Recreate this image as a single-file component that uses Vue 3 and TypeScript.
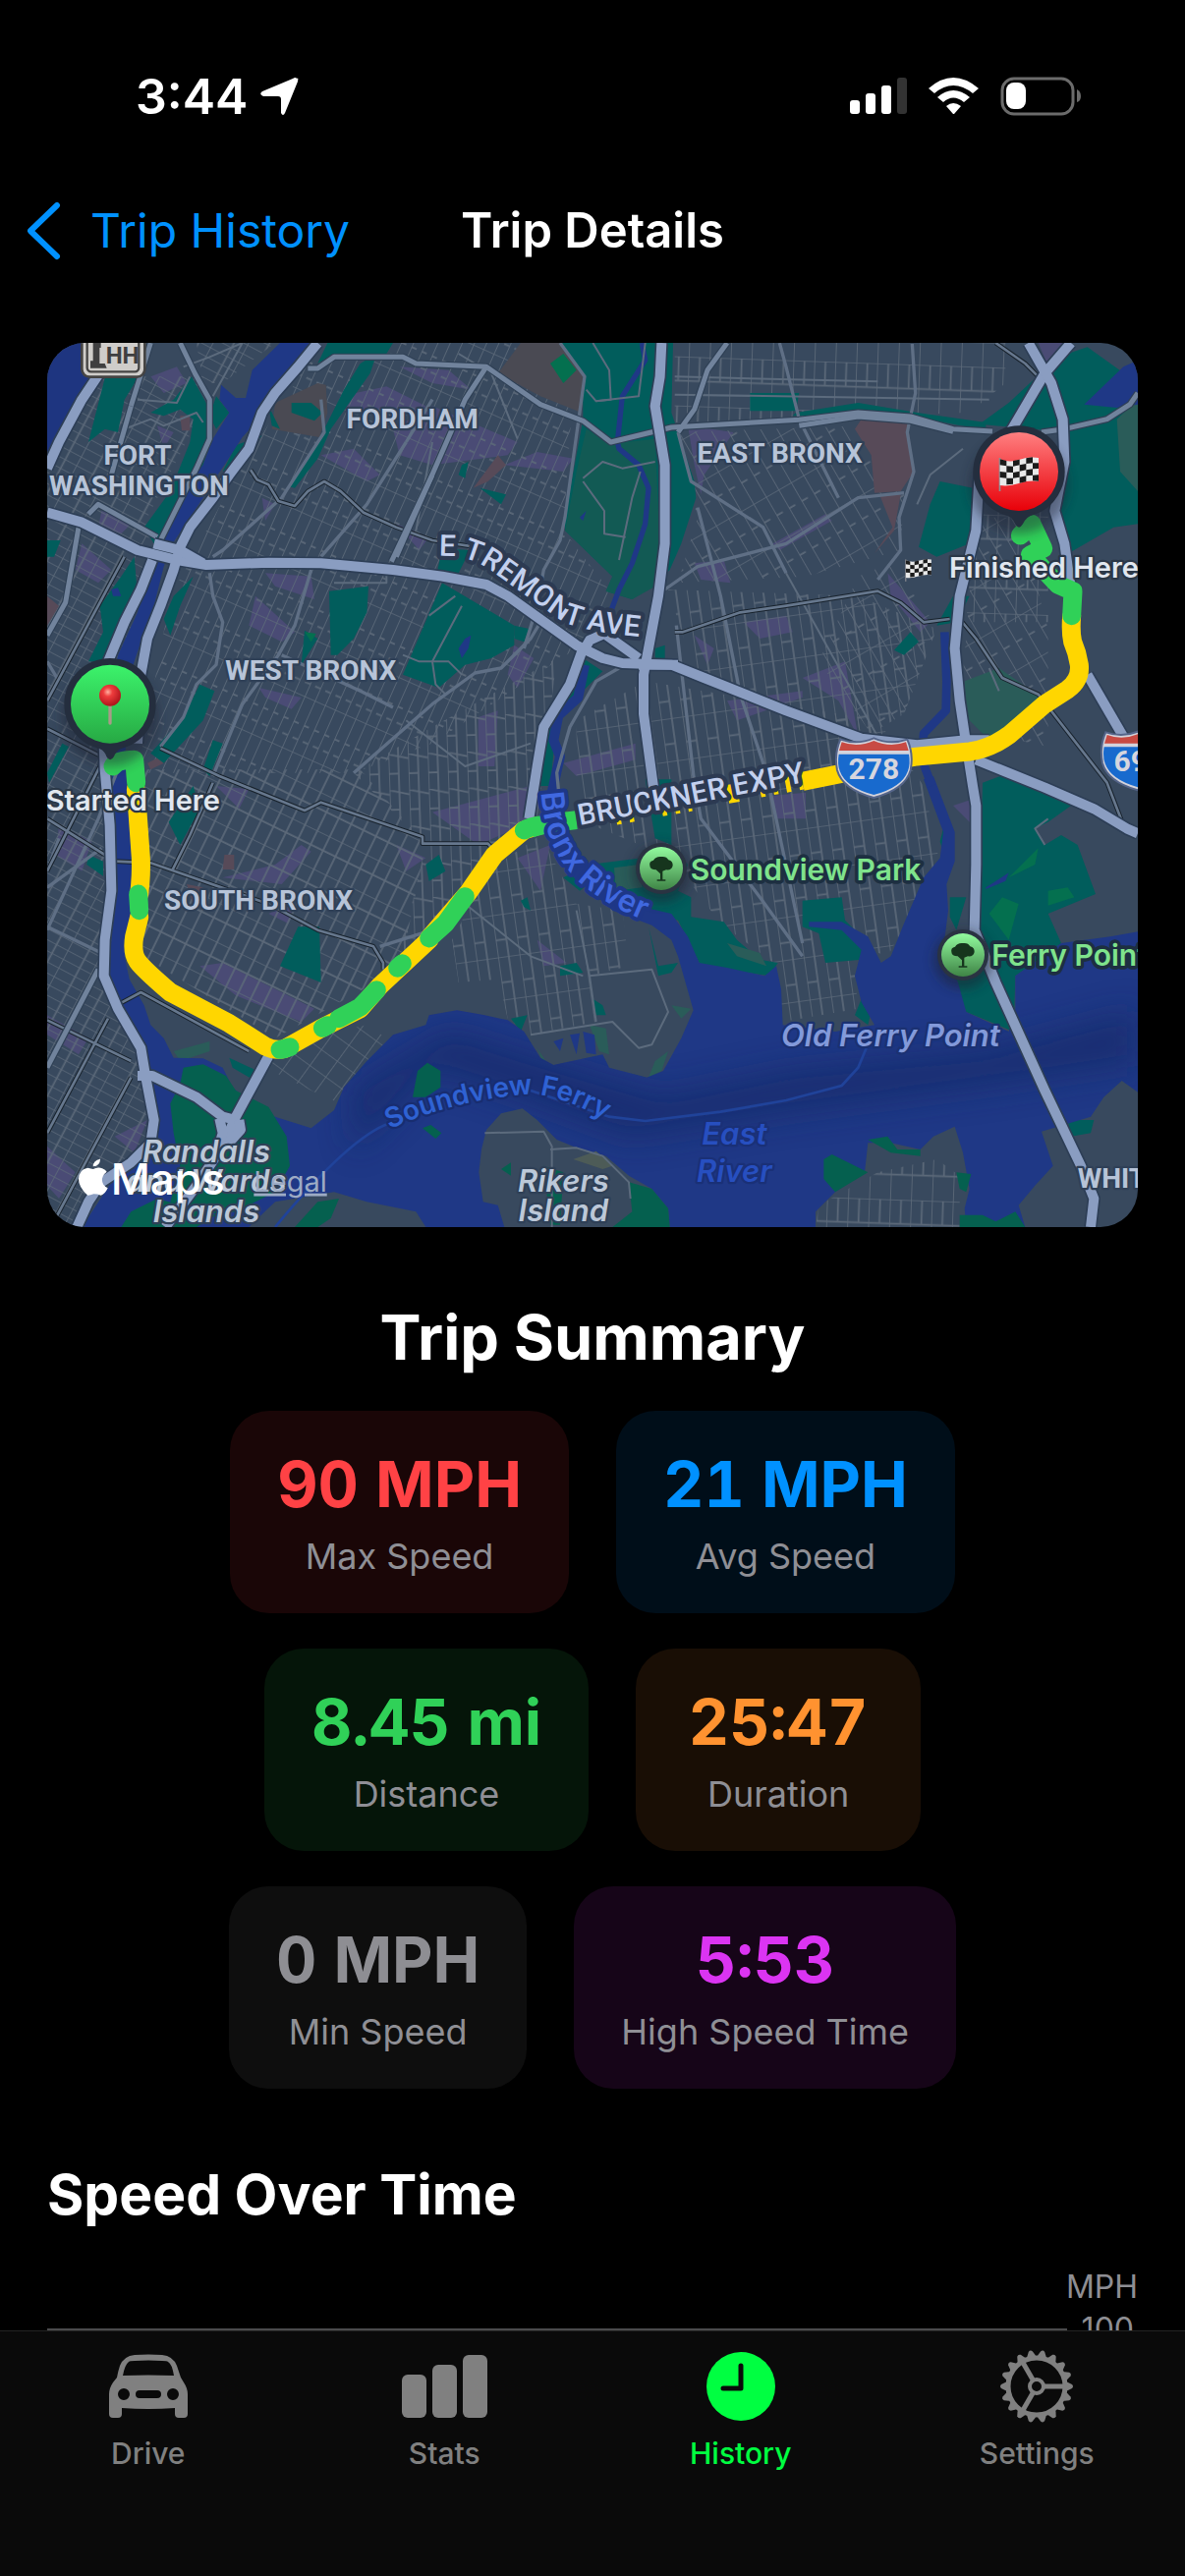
<script setup lang="ts">
interface Stat {
  value: string
  label: string
  tone: string
}

interface Tab {
  id: string
  label: string
}

const statRows: Stat[][] = [
  [
    { value: '90 MPH', label: 'Max Speed', tone: 'red' },
    { value: '21 MPH', label: 'Avg Speed', tone: 'blue' },
  ],
  [
    { value: '8.45 mi', label: 'Distance', tone: 'green' },
    { value: '25:47', label: 'Duration', tone: 'orange' },
  ],
  [
    { value: '0 MPH', label: 'Min Speed', tone: 'gray' },
    { value: '5:53', label: 'High Speed Time', tone: 'purple' },
  ],
]

const tabs: Tab[] = [
  { id: 'drive', label: 'Drive' },
  { id: 'stats', label: 'Stats' },
  { id: 'history', label: 'History' },
  { id: 'settings', label: 'Settings' },
]
const activeTab = 'history'

const gearTeeth: number[] = Array.from({ length: 18 }, (_, i) => i * 20)

// Street grids: an area and the grid pattern that fills it
const grids: { d: string; fill: string }[] = [
  { d: 'M24 380L190 130H500V230L330 560L340 700L215 1100L225 1860L320 2180L350 2430L100 2727H24Z', fill: 'gridManhattan' },
  { d: 'M480 27H720L560 150H500Z', fill: 'gridManhattan' },
  { d: 'M860 27H1640L1600 600L1800 860L1640 960L1200 1250L960 1340H300L400 800L620 400Z', fill: 'gridWest' },
  { d: 'M280 1330H980L1180 1560L1110 1900L990 2000L720 2150L300 1890Z', fill: 'gridSouth' },
  { d: 'M720 2170L1000 2110L1120 2190L975 2375L830 2310L690 2240Z', fill: 'gridPort' },
  { d: 'M960 1340L1200 1200L1580 990L1520 1480L1380 1560L1180 1830L1100 1900L1180 1560Z', fill: 'gridMid' },
  { d: 'M1370 1640L1530 1530L1640 1740L1780 1760L1800 1930L1680 1960L1700 2100L1500 2140L1430 2090L1400 1970L1280 1980L1260 1850Z', fill: 'gridEast' },
  { d: 'M1640 1180L1850 1060L2560 1180L2700 1380L2750 1620L2590 1900L2480 1860L2500 2060L2270 2100L2255 1930L2080 1800L1930 1600L1640 1480Z', fill: 'gridEast' },
  { d: 'M1940 27H2950V150L2840 240L1940 270Z', fill: 'gridNorth' },
  { d: 'M1940 300L2520 280L2640 480L2630 660L2340 740L1950 760L2010 560Z', fill: 'gridSlant' },
  { d: 'M1920 780L2500 800L2740 900L2640 1160L2540 1220L2000 1030Z', fill: 'gridEast' },
  { d: 'M2500 740L2620 690L2740 900L2640 1160L2540 1220L2380 1000Z', fill: 'gridSlant' },
  { d: 'M2860 560H2990L3080 900V1260L2940 1230L2820 1040Z', fill: 'gridSlant' },
  { d: 'M2860 520H3080V880H2830Z', fill: 'gridNorth' },
  { d: 'M2380 2660L2560 2560L2740 2520L2810 2570V2727H2370Z', fill: 'gridNorth' },
]

const shops: string[] = [
  'M340 130L420 100L450 150L380 180Z', 'M190 540L290 570L250 610L180 590Z', 'M130 640L220 720L180 760L110 720Z',
  'M360 280L410 300L380 350Z', 'M920 190L1060 160L1180 220L1160 250L940 230Z', 'M860 370L960 350L1040 430L1000 450Z',
  'M680 500L720 520L690 570Z', 'M690 730L830 740L840 810L720 770Z', 'M660 800L780 910L740 940L640 890Z',
  'M1090 580L1190 620L1160 660Z', 'M670 1080L800 1110L770 1145L690 1110Z', 'M1080 290L1200 220L1460 330L1430 370L1200 400L1100 370Z',
  'M1420 400L1520 360L1630 380L1600 420Z', 'M1100 100L1250 110L1320 170L1200 150Z', 'M1450 950L1510 990L1460 1080L1430 1040Z',
  'M1340 1170L1400 1150L1390 1320H1340Z', 'M1600 1310L1820 1250V1300L1640 1350Z', 'M1980 280L2120 300L2030 430L2020 490L2000 400Z',
  'M2000 700L2090 690L2110 760L2020 750Z', 'M2150 880L2280 860L2300 910L2200 930Z', 'M2000 920L2060 960L2040 1010Z',
  'M2240 640L2400 550L2420 570L2260 660Z', 'M2460 1000L2500 1230L2440 1120L2330 1050Z', 'M2590 730L2720 880L2690 910L2600 800Z',
  'M540 1380L640 1390L610 1450Z', 'M560 1660L720 1620L800 1560L830 1580L740 1680Z', 'M490 1930L560 1920L840 2060L800 2100L600 2020Z',
  'M60 1500L160 1550L130 1640L50 1590Z', 'M24 2080L150 2150L120 2200L24 2140Z', 'M230 2450L330 2400L290 2500Z',
  'M1200 1460L1500 1380V1490L1340 1560Z', 'M1460 1600L1560 1560L1530 1700Z', 'M1520 1850L1610 1920L1540 1930Z',
  'M2230 1410L2340 1400V1480H2250Z', 'M2790 1440L2850 1420V1500Z', 'M1090 1560L1180 1600L1120 1640Z', 'M700 1770L780 1730L760 1800Z',
  'M2100 1120L2330 1090L2330 1110L2130 1180Z', 'M24 2480L110 2560L60 2640L24 2600Z', 'M3050 27H3130L3085 110Z',
]

const cemeteries: string[] = [
  'M720 210L850 150L875 155L880 240L855 315L710 290Z', 'M1400 120L1470 27H1590L1665 130L1655 240L1530 190Z',
]
const campuses: string[] = [
  'M1325 470L1400 370L1425 400L1370 450Z', 'M2490 290L2510 260H2650L2670 420L2630 480L2550 485L2540 370Z',
  'M2565 490H2630L2610 600L2550 670L2605 590Z', 'M430 250H460V295H435Z', 'M24 800L60 830L24 890Z',
  'M330 1310L370 1290L380 1310L340 1330Z', 'M565 1590H595V1635H560Z', 'M450 1680L500 1690L470 1740Z', 'M430 2540L460 2510L480 2550L450 2570Z',
]

const parks: string[] = [
  'M200 135H300L260 200L240 300L200 290L150 330Z',
  'M465 130L520 230L530 300L500 400L440 480L400 570L350 640L320 590L400 480L460 330L470 260L430 230L380 250L340 240L410 200Z',
  'M540 190L580 240L540 290L520 250Z', 'M600 340L680 310L600 400L560 420Z',
  'M290 680L250 740L185 830L195 910L150 1000L210 1000L300 800Z', 'M470 740L430 830L400 920L380 870L410 800Z',
  'M700 220L735 290L710 280Z', 'M770 210L830 210L865 240L840 265L770 240Z',
  'M1030 60L1010 120L890 290L850 380L780 470L760 465L850 330L930 170L980 90Z', 'M880 27H1080L1060 60L900 60L850 90Z',
  'M885 785L1005 770L1000 850L960 930L910 980H890Z', 'M810 905L850 930L800 1010Z',
  'M1230 760L1450 890V950L1380 990L1300 1010L1220 1080L1110 1040Z', 'M1230 655L1315 660L1280 730L1215 725Z', 'M1450 890L1495 900L1480 940L1450 930Z',
  'M1590 27H1935L1930 240L1950 300L2000 450L2005 500L1960 640L1925 720L1870 770L1810 810L1730 785L1750 740L1605 600V560L1660 260V120Z',
  'M1345 470L1425 490L1410 520Z', 'M1290 400L1310 390L1300 440L1280 430Z', 'M490 1070L535 1090L500 1180L380 1310L340 1280L440 1170Z',
  'M530 1240L560 1250L520 1350L500 1330Z', 'M24 630H65L45 680H24Z', 'M70 1250L90 1260L30 1370L24 1340Z',
  'M2170 180H2320L2310 235H2170Z', 'M2310 240L2500 210L2680 240L2890 270L2890 295L2660 250H2300Z',
  'M1660 990L1720 1030L1640 1110L1580 1180L1560 1380H1530L1550 1200L1640 1060Z',
  'M2870 275L2960 210L3110 70L3200 40L3354 150V580L3280 590L3150 665L3110 600L3100 540L3140 300Z',
  'M2750 450L2850 470L2840 640L2740 680L2685 650L2720 520Z', 'M2790 800H2840L2800 880L2740 890Z',
  'M2610 965L2660 910L2685 940L2640 980Z', 'M1880 960L1910 950V1000L1880 990Z', 'M1850 1360H1930V1560L1880 1540Z',
  'M2880 1370L2960 1340L3150 1440L3080 1490L3040 1510L3070 1560L3120 1530L3170 1560L3225 1710L3080 1770L3120 1860L2980 1960L2975 2130L2830 2070L2790 1960L2870 1820Z',
  'M1600 1660L1680 1620L1840 1600L1950 1590L1980 1620L1950 1700L1990 1720V1780L2090 1795L2130 1850L2200 1910L2255 1920L2230 1960L2020 1930L1950 1790L1830 1760L1700 1660L1650 1700Z',
  'M2330 1730L2450 1720L2460 1790L2530 1860L2510 1910L2400 1920L2380 1830L2330 1810Z',
  'M790 1810L855 1810L860 1980L735 1930Z', 'M150 1590L195 1610V1655L145 1620Z', 'M395 1490L470 1380L490 1450L430 1560Z',
  'M580 2210L655 2245L650 2275L590 2240Z', 'M1180 1620L1220 1590L1240 1640L1190 1670Z', 'M1590 1930L1640 1920L1660 1950L1590 1960Z',
  'M1440 2090L1490 2080L1470 2130Z', 'M1860 1810L1890 1930L1950 1920L1930 1950L1890 1960Z', 'M1690 2030L1720 2050L1730 2080H1700Z',
  'M2510 2030L2540 2070L2530 2110L2490 2080Z', 'M3140 2400L3220 2400L3210 2440L3150 2450Z', 'M2750 1550L2760 1510V1580Z',
  'M2900 1300L2960 1330L2940 1360Z', 'M2780 1720H2830L2800 1820L2780 1780Z', 'M1470 1730L1490 1720L1500 1760L1480 1750Z',
]
const meadows: string[] = [
  'M2825 1060L2930 1020L3060 1110L3020 1200L2920 1260L2830 1170Z', 'M3290 260L3354 200V480L3300 420Z',
  'M410 2190L520 2160L520 2190L430 2220Z', 'M2100 1860L2200 1890L2220 1930L2130 1900Z', 'M1755 1630L1830 1620L1840 1690L1760 1700Z',
  'M1680 2110L1730 2120L1740 2200L1710 2190Z', 'M1520 2180L1560 2240L1540 2230Z', 'M1880 2220L1920 2190L1900 2250L1860 2270Z',
  'M1930 2050L1990 2060L1960 2090Z', 'M600 2340L700 2380L680 2400Z',
]

const water =
  'M735 27H845L800 90L735 140L690 200L665 265L620 315L575 385L545 430L500 500L440 590L400 650L380 710L345 850L300 970L270 1060L262 1300L275 1500L290 1680L260 1900L275 1970L320 2050L340 2110L380 2150L410 2210L500 2212L560 2240L590 2300L640 2345L720 2390L830 2425L900 2370L930 2300L1000 2220L1080 2140L1180 2110L1190 2080L1275 2065L1360 2080L1430 2095L1480 2130L1530 2210L1570 2232L1720 2200L1740 2240L1855 2270L1905 2250L1960 2150L1997 2065L1950 1900L1930 1850L1870 1805L1750 1760L1660 1680L1600 1600L1640 1590L1700 1660L1800 1740L1930 1770L1980 1840L2015 1920L2100 1935L2215 1960L2250 1930L2265 2000L2270 2110L2430 2130L2550 2110L2510 2040L2490 1960L2510 1880L2450 1820L2350 1810L2350 1795L2450 1795L2530 1840L2570 1920L2600 1900L2640 1800L2700 1660L2750 1600L2760 1520L2700 1360L2730 1350L2795 1520V1610L2770 1680L2775 1760L2760 1880L2805 1980L2830 2070L2960 2130L2980 2060V1960L3120 1860L3270 1840L3354 1825V2315L3305 2280L3250 2330L3210 2390L3060 2435L3095 2540L3040 2600L2990 2660L3010 2727H2830L2825 2670L2840 2610L2820 2500L2795 2420L2730 2450L2690 2490L2600 2470H2530L2520 2560L2430 2620L2370 2680V2727H130L240 2560L330 2490L355 2430L350 2300L340 2240L320 2180L250 2070L205 1980L220 1850L225 1560L210 1300L215 1100L240 980L300 850L340 700L360 640L400 580L430 480L500 400L530 320L580 240L550 200L555 155L600 195L630 195L650 110Z'

const islands: string[] = [
  'M1365 2430L1410 2380L1475 2365L1520 2400L1580 2460L1640 2485L1730 2510L1800 2570L1870 2610L1920 2670L1925 2727H1420L1400 2660L1355 2650L1342 2560L1350 2490Z',
  'M640 2727L720 2650L900 2620L1000 2650L1150 2680L1180 2727Z',
]
const islandParks: string[] = [
  'M430 2290L440 2240L500 2230L570 2265L600 2310L700 2360L755 2450L765 2540L720 2620L600 2680L480 2690L400 2650L430 2540L410 2440L400 2350Z',
  'M250 2727L280 2680L360 2640L540 2690L480 2727Z', 'M780 2727L850 2650L915 2640L890 2700L850 2727Z',
  'M1140 2330L1155 2250L1185 2225L1225 2250V2300L1180 2330Z', 'M1170 2425L1195 2415L1228 2440L1210 2457Z',
  'M1800 2590L1870 2610L1920 2670L1925 2727H1750L1810 2680Z', 'M1410 2550L1440 2530V2570Z', 'M1540 2540L1600 2560L1590 2720H1560Z',
  'M2395 2520L2420 2505L2470 2530L2530 2560L2430 2620L2395 2580Z', 'M2530 2460L2590 2450L2620 2490L2690 2490V2510L2600 2500Z',
  'M2800 2560L2845 2565L2830 2620L2810 2610Z', 'M2810 2690L2880 2690L2920 2710L2980 2680L3010 2727H2810Z',
]

const minorRoads: string[] = [
  'M860 200L870 300L740 500L560 660L530 680', 'M1120 330L1000 520L860 680', 'M1200 200L1120 330', 'M830 720L780 890L730 980L620 1130L530 1350',
  'M520 730L530 800L560 880L540 1010L480 1070L440 1170L370 1260', 'M960 1340L1200 1130L1330 1035L1410 1020L1500 930L1530 880',
  'M1590 27L1665 130L1605 560L1590 630L1540 720L1520 830L1480 960', 'M1950 300L1990 450L2210 590L2280 730',
  'M1910 780L2010 710L2280 640L2500 500L2640 485', 'M1945 890L2000 1370L2020 1480L2200 1720L2330 1900', 'M2010 530L2080 800L2140 1100L2220 1340L2330 1860',
  'M2260 27L2280 100L2320 260L2440 500', 'M2665 30L2675 180L2650 300L2670 420L2625 560L2630 660L2560 750', 'M1770 1020L1700 1060L1620 1200L1580 1340L1590 1440',
  'M24 1820L180 1480L240 1330', 'M24 1690L190 1570', 'M60 1540L24 1640', 'M60 1060L24 1000', 'M24 1810L190 1890',
  'M740 980L980 1090L1080 1140', 'M1040 1870L1200 1820L1300 1740',
]
const lanes: string[] = [
  'M1460 320L1380 120L1280 60', 'M440 100L520 70L620 27', 'M300 200L420 210L460 130', 'M260 290L340 260L380 280L480 240L500 270',
  'M1640 1760L1680 1960L1700 2100', 'M1500 2140L1750 2100L1830 2180L1870 2170L1920 2070L1870 1940L1680 1960',
  'M1360 2440L1540 2435L1565 2480V2727', 'M1560 2490L1640 2485L1720 2510L1800 2590L1805 2640', 'M620 27L530 190', 'M1200 330L1150 600',
  'M1690 27L1740 110L1745 200L1700 205L1670 170', 'M1700 205L1830 190L1850 27', 'M1660 440L1720 390L1780 410L1880 390',
  'M1660 450L1725 540V610L1790 620', 'M1835 420L1810 500L1770 690', 'M2680 520L2720 430L2820 350', 'M1190 860L1270 800',
  'M1290 830L1200 1000L1210 1070L1240 1100', 'M1110 980L1160 1000H1250L1290 1040', 'M3080 1480L3040 1510L3070 1560', 'M2930 1090L2900 1020',
  'M1940 130L2560 145', 'M1940 185L2900 200', 'M1120 1180L1300 1320L1500 1250', 'M1300 1740L1500 1900L1660 1960', 'M900 760H1060V710', 'M2280 730L2560 1230',
]
const blackRoads: string[] = [
  'M645 415L665 445L700 460L730 510L780 525L820 480L870 450L920 480L990 545L1090 590L1200 630L1330 650',
  'M24 1205L190 1290', 'M370 1265L550 1350L810 1455L860 1430L1170 1535V1556H1370L1390 1580', 'M530 1370L460 1530L405 1640', 'M230 1610L340 1615L700 1740L850 1820L1020 1870L1050 1920V1940',
  'M245 2045L310 2010L640 2190', 'M24 2095L280 2220', 'M24 2440L210 2090', 'M50 2700L280 2270', 'M1940 910H1965L2140 850L2280 830L2560 785L2630 820L2700 880L2780 870',
  'M2810 870L2860 930L2940 1050L3050 1100L3260 1370L3310 1500', 'M24 1480L200 1590', 'M24 1640L190 1310', 'M260 680L24 1120', 'M2920 27L3010 90L3050 130',
]
const avenues: string[] = [
  'M820 105H850L900 70H1110L1150 90L1365 100L1530 215L1660 265L1745 330L1930 285L2320 262L2500 240L2660 252L2790 290L2910 297',
  'M3060 300L3130 290L3260 260L3330 215L3354 180', 'M1365 100L1300 200L1090 680', 'M1200 430L1075 695', 'M430 27L475 120L520 200V320L480 410L430 510L370 630', 'M280 220L220 430',
  'M120 590L80 820L24 920', 'M340 27L280 220', 'M2100 27L2040 110L2000 230L1950 300', 'M24 2240L180 1940', 'M2320 280L2500 252L2660 265L2790 298', 'M150 550L180 520L360 620',
]
const highways: string[] = [
  'M24 545L130 575L300 660L420 690L510 705L700 698L860 700L1080 720L1230 740L1365 765L1430 800L1640 950L1720 990L1780 1005L1930 1010L2030 1050L2280 1150L2510 1235L2680 1255L2830 1240L2900 1240',
  'M24 410L60 330L130 200L190 110', 'M850 27L790 100L720 180L680 240L640 350L580 430L530 500L460 590L430 650L410 720L370 830L330 930L310 1040L300 1250',
  'M345 690L310 780L260 880L210 1000L195 1200L200 1330L215 1500L220 1700L200 1850L197 1960L240 2060L310 2180L325 2270L350 2400L340 2470L280 2530L190 2590L150 2650L115 2727',
  'M350 640L430 660L500 700', 'M1900 27L1895 130L1880 220L1910 400V640L1890 800L1860 960L1845 1040V1160L1880 1420',
  'M1660 960L1620 1070L1540 1200L1520 1320L1495 1480', 'M1660 970L1680 935L1725 915L1830 990', 'M1830 1010H1950',
  'M3150 27L3070 120L2970 290L2870 430L2860 600L2810 800L2795 960L2810 1120L2825 1220L2850 1380L2860 1440V1620L2855 1820L2920 1980L3070 2310L3180 2540L3220 2640L3210 2727',
  'M3020 27L3090 150L3125 260L3130 390L3100 540L3130 640L3150 780', 'M3200 1040L3310 1230', 'M2860 1300L3070 1385L3220 1450L3320 1510L3354 1525',
  'M300 2265L345 2265L480 2330L560 2390L600 2400', 'M700 2205L600 2390L560 2480L480 2600L385 2727', 'M550 2395L560 2440L545 2490', 'M610 2400L615 2430L570 2480',
]

const yellowRoute: string[] = [
  'M295 1390L310 1600Q312 1650 305 1710', 'M305 1780L290 1840Q282 1890 300 1915T400 2010L580 2105L690 2175Q720 2190 750 2182L860 2120L980 2060L1040 1990L1190 1850',
  'M1190 1845L1310 1705L1390 1590L1480 1515L1520 1502',
]
const greenRoute: string[] = [
  'M225 1320Q240 1300 290 1300L296 1370', 'M302 1710L305 1760', 'M735 2185Q750 2183 765 2177', 'M865 2119L880 2111', 'M915 2090L980 2055L1030 2003',
  'M1094 1936L1108 1922', 'M1190 1845L1240 1800L1300 1718', 'M1480 1515Q1500 1504 1530 1500',
]
</script>

<template>
  <div class="phone">
    <header class="status-bar">
      <div class="clock">
        <span>3:44</span>
        <svg width="40" height="40" viewBox="0 0 40 40" aria-hidden="true">
          <path d="M38 2Q40 0 39 5L26 37Q24 41 22 37V23Q22 20 19 20H4Q-1 18 3 15L34 2Q37 0 38 2Z" fill="#fff" />
        </svg>
      </div>
      <svg width="236" height="40" viewBox="0 0 236 40" aria-hidden="true">
        <rect x="0" y="24" width="10" height="14" rx="3" fill="#fff" />
        <rect x="16" y="17" width="10" height="21" rx="3" fill="#fff" />
        <rect x="32" y="9" width="10" height="29" rx="3" fill="#fff" />
        <rect x="48" y="1" width="10" height="37" rx="3" fill="#333" />
        <path d="M80 12Q105-10 131 12L125 17Q105 1 86 17Z" fill="#fff" />
        <path d="M89 21Q105 7 122 21L116 26Q105 17 95 26Z" fill="#fff" />
        <path d="M98 30Q105 24 113 30L106 38H105Z" fill="#fff" />
        <rect x="155" y="2" width="72" height="36" rx="12" fill="none" stroke="#6b6b6b" stroke-width="3" />
        <rect x="159" y="6" width="20" height="27" rx="8" fill="#fff" />
        <path d="M231 13Q235 15 235 20T231 26Z" fill="#6b6b6b" />
      </svg>
    </header>

    <nav class="nav-bar" aria-label="Page">
      <a class="back" href="#history">
        <svg width="36" height="60" viewBox="0 0 36 60" aria-hidden="true">
          <path d="M30 4L3 30L30 56" fill="none" stroke="#0091ff" stroke-width="6" stroke-linecap="round" stroke-linejoin="round" />
        </svg>
        <span>Trip History</span>
      </a>
      <h1>Trip Details</h1>
    </nav>

    <main class="content">
      <section class="map" aria-label="Trip map">
        <svg class="map-art" viewBox="24 27 3330 2700">
          <defs>
            <pattern id="gridManhattan" width="96" height="30" patternUnits="userSpaceOnUse" patternTransform="rotate(28)"><path d="M0 0H96M0 0V30M58 0V30" /></pattern>
            <pattern id="gridWest" width="34" height="170" patternUnits="userSpaceOnUse" patternTransform="rotate(24)"><path d="M0 0H34M0 84H17M17 130H34M0 0V170" /></pattern>
            <pattern id="gridSouth" width="42" height="110" patternUnits="userSpaceOnUse" patternTransform="rotate(26)"><path d="M0 0H42M0 48H42M0 0V110M42 0V110" /></pattern>
            <pattern id="gridPort" width="60" height="60" patternUnits="userSpaceOnUse" patternTransform="rotate(36)"><path d="M0 0H60M0 0V60" /></pattern>
            <pattern id="gridMid" width="60" height="110" patternUnits="userSpaceOnUse" patternTransform="rotate(-2)"><path d="M0 0L60 14M0 60H30M0 0V110M30 0V110" /></pattern>
            <pattern id="gridEast" width="66" height="130" patternUnits="userSpaceOnUse" patternTransform="rotate(-8)"><path d="M0 0H66M0 78H33M0 0V130M33 0V130" /></pattern>
            <pattern id="gridNorth" width="64" height="150" patternUnits="userSpaceOnUse" patternTransform="rotate(2)"><path d="M0 0H64M0 74H64M0 0V150M34 0V74" /></pattern>
            <pattern id="gridSlant" width="44" height="140" patternUnits="userSpaceOnUse" patternTransform="rotate(-30)"><path d="M0 0H44M0 66H22M0 0V140" /></pattern>
            <clipPath id="waterArea"><path :d="water" /></clipPath>
            <filter id="soft" x="-20%" y="-60%" width="140%" height="220%"><feGaussianBlur stdDeviation="50" /></filter>
            <filter id="shade" x="-40%" y="-40%" width="180%" height="180%"><feGaussianBlur stdDeviation="16" /></filter>
            <linearGradient id="startFill" x1="0" y1="0" x2="0" y2="1"><stop offset="0" stop-color="#3cf36b" /><stop offset="1" stop-color="#27a944" /></linearGradient>
            <linearGradient id="finishFill" x1="0" y1="0" x2="0" y2="1"><stop offset="0" stop-color="#ff7f80" /><stop offset="1" stop-color="#e80008" /></linearGradient>
            <linearGradient id="parkFill" x1="0" y1="0" x2="0" y2="1"><stop offset="0" stop-color="#92fb9e" /><stop offset="1" stop-color="#3f8446" /></linearGradient>
            <radialGradient id="pinHead" cx=".4" cy=".35" r=".7"><stop offset="0" stop-color="#ffb0a0" /><stop offset=".3" stop-color="#ef3d3d" /><stop offset="1" stop-color="#a90f18" /></radialGradient>
            <path id="tremontLine" d="M1220 678Q1300 672 1370 716L1600 880Q1690 915 1900 930" />
            <path id="brucknerLine" d="M1650 1500L2390 1358" />
            <path id="riverLine" d="M1532 1400Q1540 1540 1610 1630Q1700 1750 1960 1830" />
            <path id="ferryLine" d="M1070 2428Q1260 2340 1500 2320Q1620 2325 1800 2445" />
            <g id="flag">
              <rect x="-61" y="-42" width="5" height="102" fill="#8e8e93" />
              <path d="M-58-38Q-30-26 0-36T60-42V30Q30 26 0 36T-58 42Z" fill="#e9e9e9" />
              <path d="M-58-38L-38-33V-17L-58-20ZM-18-33L2-37V-20L-18-16ZM22-41L42-44V-26L22-24ZM-38-17L-18-16V3L-38 2ZM2-20L22-24V-5L2-1ZM42-26L60-26V-9L42-8ZM-58 0L-38 2V20L-58 18ZM-18 3L2-1V17L-18 20ZM22-5L42-8V11L22 13ZM-38 20L-18 20V38L-38 40ZM2 17L22 13V31L2 35ZM42 11L60 10V29L42 28Z" fill="#1b1b1b" />
            </g>
            <g id="parkPin">
              <circle r="90" cy="14" fill="#1c2433" opacity=".5" filter="url(#shade)" />
              <circle r="78" fill="#2a3342" />
              <circle r="66" fill="url(#parkFill)" />
              <path d="M-35-9Q-38-22-24-25Q-16-38 0-36Q16-38 22-26Q36-22 35-9Q32 6 15 4L4 8V34H13V38H-13V34H-3V16L-16 4Q-34 4-35-9Z" fill="#16351d" />
            </g>
            <g id="shield">
              <path d="M-102-84Q-50-66 0-88Q50-66 102-84Q122-40 112 10Q96 68 0 94Q-96 68-112 10Q-122-40-102-84Z" fill="#d3d3dc" stroke="#55658a" stroke-width="6" />
              <path d="M-98-76Q-50-58 0-80Q50-58 98-76L106-50H-106Z" fill="#c84a43" />
              <path d="M-107-39H107Q112-10 104 12Q86 62 0 85Q-86 62-104 12Q-112-10-107-39Z" fill="#186ace" />
            </g>
          </defs>

          <rect x="24" y="27" width="3330" height="2700" fill="#38495e" />
          <g fill="#4a4b75"><path v-for="d in shops" :key="d" :d="d" /></g>
          <g><path v-for="g in grids" :key="g.d" :d="g.d" :fill="`url(#${g.fill})`" /></g>
          <path d="M24 27H160L150 140L100 230L24 360Z" fill="#1e3580" />
          <g fill="#4a4a53"><path v-for="d in cemeteries" :key="d" :d="d" /></g>
          <g fill="#574a58"><path v-for="d in campuses" :key="d" :d="d" /></g>
          <g fill="#015d5c"><path v-for="d in parks" :key="d" :d="d" /></g>
          <path d="M1670 290L1745 335L1880 320L1900 760L1810 810L1730 785L1750 740L1605 600L1640 420Z" fill="#125a54" />
          <g fill="#2a5c59"><path v-for="d in meadows" :key="d" :d="d" /></g>
          <path d="M1560 90L1600 60L1640 110L1600 150ZM2960 1660L3050 1570L3040 1620ZM2900 1770L2940 1720L2990 1740L2960 1850ZM3080 1700L3140 1690L3160 1720L3080 1745ZM810 910L845 915L830 940Z" fill="#04704f" />
          <path :d="water" fill="#1f3886" />
          <g clip-path="url(#waterArea)">
            <path d="M950 2300L1250 2120L1500 2200L1900 2320L2300 2240L2900 2180L3354 2060V2230L2900 2300L2300 2380L1800 2460L1450 2330L1200 2250L960 2500Z" fill="#172c69" opacity=".65" filter="url(#soft)" />
          </g>
          <path d="M1840 27L1850 80L1780 190L1765 330L1770 350L1830 400L1860 470L1850 580L1810 700L1770 780L1740 860" class="creek" stroke-width="16" />
          <path d="M1665 1010L1645 1110L1585 1165L1570 1240L1590 1290L1565 1400L1570 1500L1610 1610L1660 1670" class="creek" stroke-width="30" />
          <path d="M2764 910L2770 1060L2768 1150L2700 1220L2695 1300L2725 1380" class="creek" stroke-width="26" />
          <path d="M3190 215L3310 100L3354 80V215L3290 225ZM1280 960L1300 930L1318 920L1310 960L1290 990ZM1650 560L1670 540L1660 570ZM2890 1690L2960 1645L2950 1670L2890 1695ZM220 780L240 775L250 800L225 800Z" fill="#1f3886" />
          <path d="M1570 2160L1600 2150L1590 2190ZM1620 2140L1650 2135L1640 2200ZM1660 2130L1695 2140L1700 2200L1670 2195Z" fill="#1f3886" />
          <g fill="#38495e"><path v-for="d in islands" :key="d" :d="d" /></g>
          <g fill="#05604f"><path v-for="d in islandParks" :key="d" :d="d" /></g>
          <path d="M1630 2520L1700 2495L1750 2540L1720 2550Z" fill="#4d5b57" />
          <path d="M720 2727Q950 2450 1070 2410M1500 2310L1740 2390L1850 2403L2080 2375L2280 2340L2450 2295L2500 2240L2525 2180" class="ferry" />

          <g class="roads lane"><path v-for="d in lanes" :key="d" :d="d" /></g>
          <g class="roads minor"><path v-for="d in minorRoads" :key="d" :d="d" /></g>
          <g class="roads black"><path v-for="d in blackRoads" :key="d" :d="d" /></g>
          <g class="roads steel"><path v-for="d in blackRoads" :key="d" :d="d" /></g>
          <g class="roads avenue-edge"><path v-for="d in avenues" :key="d" :d="d" /></g>
          <g class="roads avenue"><path v-for="d in avenues" :key="d" :d="d" /></g>
          <g class="roads highway-edge"><path v-for="d in highways" :key="d" :d="d" /></g>
          <g class="roads highway"><path v-for="d in highways" :key="d" :d="d" /></g>

          <g class="route yellow"><path v-for="d in yellowRoute" :key="d" :d="d" /></g>
          <g class="route green"><path v-for="d in greenRoute" :key="d" :d="d" /></g>
          <path class="route green butt" d="M1500 1510Q1540 1495 1640 1484" />
          <path class="route yellow butt" d="M2102 1405L2134 1400M2330 1366L2460 1340M2620 1300L2670 1291" />
          <path class="route yellow" d="M2670 1291L2840 1275Q2900 1268 2960 1225L3070 1130L3140 1085Q3180 1055 3175 1010Q3170 975 3155 940Q3148 910 3152 860" />
          <path class="route green" d="M2995 615L3030 580L3065 655L3025 675L3110 765L3156 785L3152 860" />
          <path d="M1760 1474L1820 1463M1900 1448L1990 1432M2200 1390L2330 1366" class="specks" />

          <circle cx="216" cy="1170" r="150" fill="#1c2433" opacity=".45" filter="url(#shade)" />
          <circle cx="216" cy="1130" r="140" fill="#242e3e" />
          <path d="M165 1255Q200 1270 205 1290Q216 1310 228 1290Q235 1270 267 1255Z" fill="#242e3e" />
          <circle cx="216" cy="1130" r="120" fill="url(#startFill)" />
          <rect x="211" y="1120" width="10" height="73" rx="5" fill="#a89a88" />
          <circle cx="216" cy="1103" r="33" fill="url(#pinHead)" />

          <circle cx="2991" cy="460" r="150" fill="#1c2433" opacity=".45" filter="url(#shade)" />
          <circle cx="2991" cy="420" r="140" fill="#242e3e" />
          <path d="M2940 545Q2975 560 2980 580Q2991 600 3003 580Q3010 560 3042 545Z" fill="#242e3e" />
          <circle cx="2991" cy="420" r="120" fill="url(#finishFill)" />
          <use href="#flag" x="2991" y="420" />

          <use href="#parkPin" x="1899" y="1632" />
          <use href="#parkPin" x="2820" y="1896" />
          <use href="#shield" x="2548" y="1322" />
          <use href="#shield" x="3358" y="1300" />
          <g class="shield-text">
            <text x="2548" y="1358">278</text>
            <text x="3358" y="1336">695</text>
          </g>
          <rect x="130" y="-30" width="192" height="161" rx="24" fill="#cfcdca" stroke="#454443" stroke-width="8" />
          <rect x="146" y="-30" width="158" height="145" rx="12" fill="none" stroke="#454443" stroke-width="7" />
          <path d="M164 27H188V42H184V90H200L206 104H156V82H164Z" fill="#3f3f40" />
          <text class="route-mark" x="203" y="90">HH</text>

          <g class="area">
            <text x="300" y="398">FORT</text>
            <text x="304" y="492">WASHINGTON</text>
            <text x="1139" y="289">FORDHAM</text>
            <text x="2261" y="394">EAST BRONX</text>
            <text x="829" y="1055">WEST BRONX</text>
            <text x="669" y="1757">SOUTH BRONX</text>
            <text class="from-left" x="3170" y="2607">WHITESTONE</text>
          </g>
          <g class="street">
            <text><textPath href="#tremontLine">E TREMONT AVE</textPath></text>
            <text><textPath href="#brucknerLine">BRUCKNER EXPY</textPath></text>
          </g>
          <text class="river"><textPath href="#riverLine">Bronx River</textPath></text>
          <text class="boat"><textPath href="#ferryLine">Soundview Ferry</textPath></text>
          <g class="park-name">
            <text x="1988" y="1667">Soundview Park</text>
            <text x="2908" y="1930">Ferry Point</text>
          </g>
          <g class="place">
            <text class="point" x="2599" y="2175">Old Ferry Point</text>
            <text class="bay" x="2122" y="2475">East</text>
            <text class="bay" x="2122" y="2588">River</text>
            <text x="1600" y="2618">Rikers</text>
            <text x="1600" y="2710">Island</text>
            <text x="510" y="2528">Randalls</text>
            <text x="510" y="2618">and Wards</text>
            <text x="510" y="2712">Islands</text>
          </g>
          <g class="marker">
            <text x="20" y="1455">Started Here</text>
            <text x="2778" y="745">Finished Here</text>
          </g>
          <use href="#flag" transform="translate(2684 716) scale(.66)" />
          <path d="M165 2550Q178 2542 192 2548Q202 2552 206 2558Q190 2570 192 2586Q194 2602 209 2608Q200 2628 188 2630Q178 2626 166 2626Q156 2630 148 2630Q120 2606 120 2580Q122 2550 148 2546Q158 2548 165 2550ZM164 2542Q164 2524 186 2519Q186 2540 164 2542Z" fill="#fff" />
          <text class="brand" x="218" y="2628">Maps</text>
          <a href="#legal"><text class="legal" x="655" y="2618">Legal</text></a>
        </svg>
      </section>

      <h2 class="summary-title">Trip Summary</h2>
      <div class="stats">
        <div v-for="(row, i) in statRows" :key="i" class="stat-row">
          <article v-for="s in row" :key="s.label" class="stat" :class="s.tone">
            <strong>{{ s.value }}</strong>
            <span>{{ s.label }}</span>
          </article>
        </div>
      </div>

      <h2 class="chart-title">Speed Over Time</h2>
      <section class="chart" aria-label="Speed over time">
        <div class="unit">MPH</div>
        <div class="chart-body">
          <div class="plot"><i v-for="n in 6" :key="n"></i></div>
          <div class="axis">100</div>
        </div>
      </section>
    </main>

    <nav class="tab-bar" aria-label="Sections">
      <button v-for="t in tabs" :key="t.id" type="button" class="tab" :class="{ active: t.id === activeTab }">
        <svg v-if="t.id === 'drive'" width="88" height="80" viewBox="0 0 88 80" aria-hidden="true">
          <path fill-rule="evenodd" fill="currentColor" d="M12 31Q13 25 15 19Q19 9 30 8Q44 7 58 8Q69 9 73 19Q75 25 77 31L80 36Q84 42 84 48V68Q84 72 80 72H75Q71 72 71 68V62Q44 64 17 62V68Q17 72 13 72H8Q4 72 4 68V48Q4 42 8 36ZM18 29Q44 28 70 29Q68 17 64 15Q63 14 58 14Q44 13 30 14Q25 14 24 15Q20 18 18 29ZM19 42A6 6 0 1 0 19 54A6 6 0 1 0 19 42ZM69 42A6 6 0 1 0 69 54A6 6 0 1 0 69 42ZM35 44Q31 44 31 48T35 52H53Q57 52 57 48T53 44Z" />
        </svg>
        <svg v-else-if="t.id === 'stats'" width="88" height="80" viewBox="0 0 88 80" aria-hidden="true">
          <g fill="currentColor"><rect x="1" y="28" width="25" height="44" rx="6" /><rect x="32" y="18" width="25" height="54" rx="6" /><rect x="63" y="8" width="25" height="64" rx="6" /></g>
        </svg>
        <svg v-else-if="t.id === 'history'" width="88" height="80" viewBox="0 0 88 80" aria-hidden="true">
          <circle cx="44" cy="40" r="35" fill="currentColor" />
          <path d="M44 19V42H26" fill="none" stroke="#0a0a0a" stroke-width="5" stroke-linecap="round" stroke-linejoin="round" />
        </svg>
        <svg v-else width="88" height="80" viewBox="-44 -40 88 80" aria-hidden="true">
          <g fill="none" stroke="currentColor">
            <circle r="29" stroke-width="5" />
            <circle r="7" stroke-width="4" />
            <path v-for="a in [0, 120, 240]" :key="a" d="M8 0H28" stroke-width="5" :transform="`rotate(${a})`" />
          </g>
          <path v-for="a in gearTeeth" :key="a" d="M29-5L32-4L36-2Q38 0 36 2L32 4L29 5Z" fill="currentColor" :transform="`rotate(${a})`" />
        </svg>
        <span>{{ t.label }}</span>
      </button>
    </nav>
  </div>
</template>

<style>
body {
  background: #000;
}
</style>

<style scoped>
.phone {
  display: flex;
  flex-direction: column;
  height: 100vh;
  background: #000;
  color: #fff;
  font-family: Inter, "Liberation Sans", sans-serif;
  overflow: hidden;
}
.status-bar {
  display: flex;
  justify-content: space-between;
  align-items: center;
  height: 124px;
  padding: 36px 105px 0 138px;
  flex: none;
}
.clock {
  display: flex;
  align-items: center;
  gap: 12px;
  font-size: 50px;
  font-weight: 600;
  line-height: 60px;
}
.nav-bar {
  position: relative;
  display: flex;
  align-items: center;
  height: 150px;
  padding: 0 28px;
  flex: none;
}
.back {
  display: flex;
  align-items: center;
  gap: 28px;
  color: #0091ff;
  font-size: 48px;
  line-height: 60px;
  text-decoration: none;
}
.nav-bar h1 {
  position: absolute;
  left: 50%;
  transform: translateX(-50%);
  margin: 0;
  font-size: 49px;
  font-weight: 600;
  line-height: 60px;
  white-space: nowrap;
}
.content {
  flex: 1;
  min-height: 0;
  padding: 39px 48px 0;
  overflow: hidden;
}
.map {
  border-radius: 38px;
  overflow: hidden;
}
.map-art {
  display: block;
  width: 100%;
  height: auto;
}
pattern path {
  fill: none;
  stroke: #5c6979;
  stroke-width: 5;
}
.creek {
  fill: none;
  stroke: #1f3886;
  stroke-linejoin: round;
}
.ferry {
  fill: none;
  stroke: #20439a;
  stroke-width: 8;
}
.roads {
  fill: none;
  stroke-linejoin: round;
}
.lane { stroke: #5c6b7d; stroke-width: 6; }
.minor { stroke: #5f6f85; stroke-width: 10; }
.black { stroke: #18222c; stroke-width: 14; }
.steel { stroke: #66778d; stroke-width: 8; }
.avenue-edge { stroke: #2f4055; stroke-width: 22; }
.avenue { stroke: #71839c; stroke-width: 15; }
.highway-edge { stroke: #2d3e56; stroke-width: 40; }
.highway { stroke: #8a9dc1; stroke-width: 30; }
.route {
  fill: none;
  stroke-width: 57;
  stroke-linecap: round;
  stroke-linejoin: round;
}
.route.yellow { stroke: #ffd600; }
.route.green { stroke: #30d158; }
.route.butt { stroke-linecap: butt; }
.specks {
  fill: none;
  stroke: #ffd600;
  stroke-width: 50;
  stroke-dasharray: 14 26;
}
.map-art text {
  paint-order: stroke;
  stroke-linejoin: round;
  stroke: #2f4057;
  stroke-width: 14;
}
.area text {
  font: 700 84px Roboto, sans-serif;
  fill: #b7c4d8;
  text-anchor: middle;
}
.area .from-left {
  text-anchor: start;
}
.street text {
  font: 500 90px Roboto, sans-serif;
  fill: #c3d0ee;
  stroke: #2c3a52;
  stroke-width: 26;
}
.map-art .river {
  font: 600 96px Inter, sans-serif;
  fill: #4068e0;
  stroke: #1e3787;
  stroke-width: 24;
}
.map-art .boat {
  font: 600 84px Inter, sans-serif;
  fill: #2f62d3;
  stroke: #182d70;
}
.park-name text {
  font: 600 90px Inter, sans-serif;
  fill: #7fe38c;
  stroke: #1d2f41;
  stroke-width: 22;
}
.place text {
  font: italic 600 93px Inter, sans-serif;
  fill: #bcc8d8;
  text-anchor: middle;
}
.place .point {
  fill: #839ada;
  stroke: #1b3172;
}
.place .bay {
  fill: #274fc0;
  stroke: #1a3077;
}
.marker text {
  font: 600 87px Inter, sans-serif;
  fill: #e1e7ef;
  stroke: #2b3848;
}
.shield-text text {
  font: 700 90px Roboto, sans-serif;
  fill: #d6d6de;
  stroke: none;
  text-anchor: middle;
}
.map-art .route-mark {
  font: 700 72px Roboto, sans-serif;
  fill: #3f3f40;
  stroke: none;
}
.map-art .brand {
  font: 500 132px Inter, sans-serif;
  fill: #fff;
  stroke: none;
}
.map-art .legal {
  font: 400 87px Inter, sans-serif;
  fill: #9dabc4;
  stroke: none;
  text-decoration: underline;
}
.summary-title {
  margin: 72px 0 35px;
  font-size: 63px;
  font-weight: 700;
  line-height: 80px;
  text-align: center;
}
.stats {
  display: flex;
  flex-direction: column;
  gap: 36px;
}
.stat-row {
  display: flex;
  justify-content: center;
  gap: 48px;
}
.stat {
  display: flex;
  flex-direction: column;
  align-items: center;
  gap: 12px;
  box-sizing: border-box;
  min-width: 290px;
  padding: 36px 48px;
  border-radius: 40px;
}
.stat strong {
  font-size: 64px;
  font-weight: 700;
  line-height: 78px;
  font-variant-numeric: tabular-nums;
}
.stat span {
  color: #8f8f95;
  font-size: 36px;
  line-height: 44px;
}
.red { background: #1a0607; color: #ff4245; }
.blue { background: #000e19; color: #0091ff; }
.green.stat { background: #051509; color: #30d158; }
.orange { background: #190e05; color: #ff9230; }
.gray { background: #0e0e0e; color: #8e8e93; }
.purple { background: #160518; color: #db34f2; }
.chart-title {
  margin: 72px 0 38px;
  font-size: 57px;
  font-weight: 700;
  line-height: 72px;
}
.chart {
  color: #8e8e93;
  font-size: 32px;
  line-height: 40px;
}
.unit {
  text-align: right;
}
.chart-body {
  display: flex;
  height: 600px;
}
.plot {
  flex: 1;
  display: flex;
  margin-top: 22px;
  border-top: 2px solid #4a4a4c;
}
.plot i {
  flex: 1;
  border-right: 1px solid #2c2c2e;
}
.axis {
  width: 68px;
  padding: 3px 4px 0 0;
  text-align: right;
}
.tab-bar {
  display: flex;
  height: 250px;
  flex: none;
  box-sizing: border-box;
  border-top: 1px solid #242424;
  background: #0a0a0a;
}
.tab {
  flex: 1;
  display: flex;
  flex-direction: column;
  align-items: center;
  gap: 8px;
  padding: 16px 0 0;
  border: 0;
  background: none;
  color: #808080;
  font: 500 30px Inter, "Liberation Sans", sans-serif;
  line-height: 40px;
}
.tab.active {
  color: #00ff41;
}
</style>
